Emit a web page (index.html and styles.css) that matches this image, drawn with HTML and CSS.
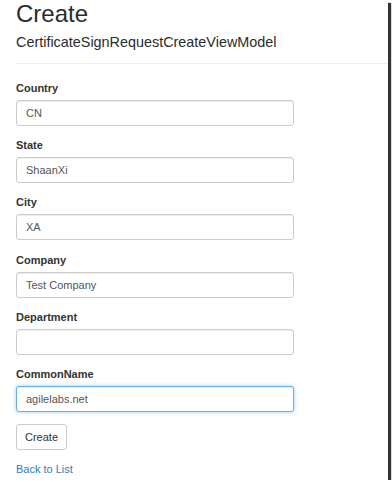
FILE: index.html
```html
<!DOCTYPE html>
<html lang="en">
<head>
    <meta charset="UTF-8">
    <meta name="viewport" content="width=device-width, initial-scale=1.0">
    <title>Create</title>
    <link rel="stylesheet" href="styles.css">
</head>
<body>
    <div class="frame">
        <div class="container">
            <h2>Create</h2>
            <h4>CertificateSignRequestCreateViewModel</h4>
            <hr>
            <form class="form-horizontal">
                <div class="form-group">
                    <label for="country">Country</label>
                    <input type="text" id="country" class="form-control" value="CN">
                </div>
                <div class="form-group">
                    <label for="state">State</label>
                    <input type="text" id="state" class="form-control" value="ShaanXi">
                </div>
                <div class="form-group">
                    <label for="city">City</label>
                    <input type="text" id="city" class="form-control" value="XA">
                </div>
                <div class="form-group">
                    <label for="company">Company</label>
                    <input type="text" id="company" class="form-control" value="Test Company">
                </div>
                <div class="form-group">
                    <label for="department">Department</label>
                    <input type="text" id="department" class="form-control" value="">
                </div>
                <div class="form-group">
                    <label for="common-name">CommonName</label>
                    <input type="text" id="common-name" class="form-control focus" value="agilelabs.net">
                </div>
                <div class="form-group">
                    <button type="button" class="btn">Create</button>
                </div>
            </form>
            <div class="back">
                <a href="#">Back to List</a>
            </div>
        </div>
    </div>
</body>
</html>
```

FILE: styles.css
```css
body {
    margin: 0;
    padding: 0;
    background-color: #fff;
    font-family: "Liberation Sans", Arial, sans-serif;
    color: #333;
}
.frame {
    width: 388px;
    height: 480px;
    background: #fff;
    overflow: hidden;
    box-shadow: 3px 3px 1px rgba(0, 0, 0, 0.8);
}
.container {
    padding: 0 16px;
}
h2 {
    margin: 0;
    padding-top: 1px;
    font-size: 24px;
    line-height: 25px;
    font-weight: 500;
    color: #2b2b2b;
}
h4 {
    margin: 8px 0 0;
    font-size: 14.4px;
    line-height: 16px;
    font-weight: 500;
    color: #2b2b2b;
}
hr {
    margin: 13px -16px 16px 0;
    border: 0;
    border-top: 1px solid #eee;
}
.form-group {
    margin-bottom: 11.2px;
}
.form-group label {
    display: block;
    font-size: 11px;
    line-height: 16px;
    font-weight: bold;
    margin-bottom: 4px;
}
.form-control {
    display: block;
    box-sizing: border-box;
    width: 278px;
    height: 26px;
    padding: 0 9px;
    font-family: inherit;
    font-size: 11px;
    color: #555;
    background: #fff;
    border: 1px solid #ccc;
    border-radius: 3px;
    box-shadow: inset 0 1px 1px rgba(0, 0, 0, 0.075);
    outline: none;
}
.form-control.focus {
    border-color: #66afe9;
    box-shadow: inset 0 1px 1px rgba(0, 0, 0, 0.075), 0 0 4px rgba(102, 175, 233, 0.6);
}
.btn {
    box-sizing: border-box;
    height: 26px;
    margin-top: 1px;
    padding: 0 8px;
    font-family: inherit;
    font-size: 11px;
    color: #333;
    background: #fff;
    border: 1px solid #ccc;
    border-radius: 3px;
    cursor: pointer;
}
.back {
    margin-top: -0.5px;
    font-size: 11px;
    line-height: 16px;
}
.back a {
    color: #337ab7;
    text-decoration: none;
}
```
